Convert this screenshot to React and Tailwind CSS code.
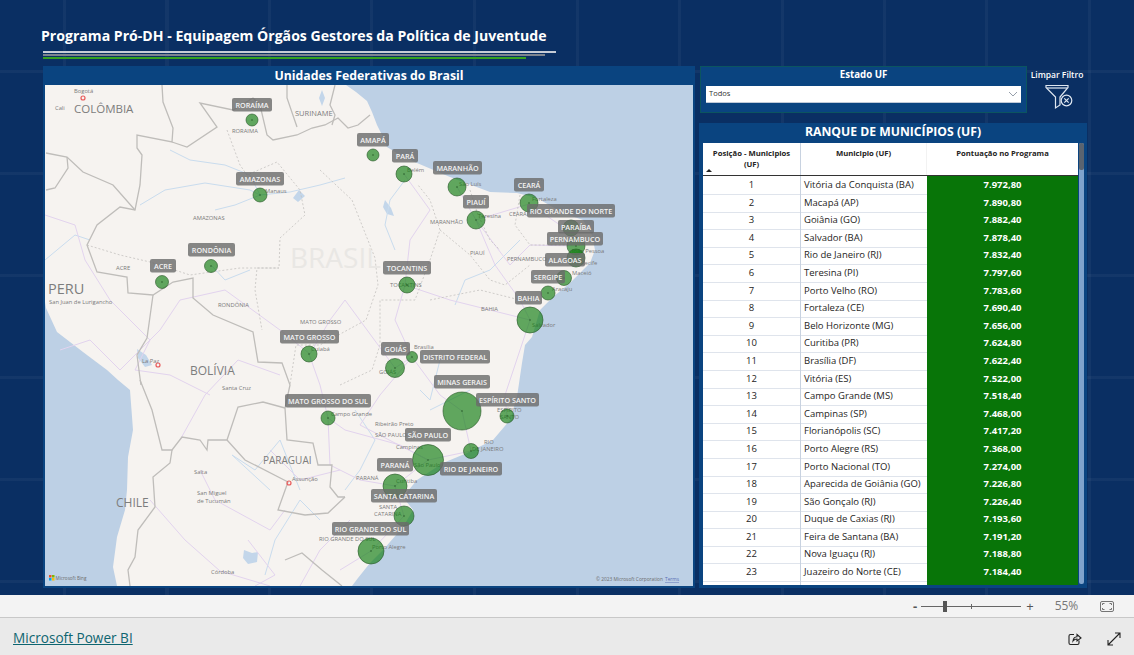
import React from "react";

const ROWS = [
  ["Vitória da Conquista (BA)", "7.972,80"],
  ["Macapá (AP)", "7.890,80"],
  ["Goiânia (GO)", "7.882,40"],
  ["Salvador (BA)", "7.878,40"],
  ["Rio de Janeiro (RJ)", "7.832,40"],
  ["Teresina (PI)", "7.797,60"],
  ["Porto Velho (RO)", "7.783,60"],
  ["Fortaleza (CE)", "7.690,40"],
  ["Belo Horizonte (MG)", "7.656,00"],
  ["Curitiba (PR)", "7.624,80"],
  ["Brasília (DF)", "7.622,40"],
  ["Vitória (ES)", "7.522,00"],
  ["Campo Grande (MS)", "7.518,40"],
  ["Campinas (SP)", "7.468,00"],
  ["Florianópolis (SC)", "7.417,20"],
  ["Porto Alegre (RS)", "7.368,00"],
  ["Porto Nacional (TO)", "7.274,00"],
  ["Aparecida de Goiânia (GO)", "7.226,80"],
  ["São Gonçalo (RJ)", "7.226,40"],
  ["Duque de Caxias (RJ)", "7.193,60"],
  ["Feira de Santana (BA)", "7.191,20"],
  ["Nova Iguaçu (RJ)", "7.188,80"],
  ["Juazeiro do Norte (CE)", "7.184,40"],
];

// map drawing uses page coordinates, the viewBox starts at the map's corner
const ATLANTIC =
  "M346,85 L356,92 L367,101 L372,112 L377,125 L383,137 L387,147 L400,155 L417,163 L450,177 L490,192 L517,193 L537,198 L563,213 L583,220 L592,235 L595,250 L590,263 L570,283 L553,297 L540,310 L532,337 L525,345 L522,363 L517,397 L510,420 L493,440 L467,453 L443,463 L417,480 L403,497 L413,510 L403,527 L383,550 L370,563 L358,578 L352,586 L693,586 L693,85 Z";
const PACIFIC =
  "M45,302 L46,308 L57,332 L83,352 L107,370 L118,380 L130,390 L133,430 L128,457 L127,490 L125,510 L117,537 L113,567 L117,586 L45,586 Z";

const BORDERS = [
  "162,85 163,102 173,128 172,142 137,135 137,148 142,155 140,185 135,210 120,207 97,225 87,245 97,272 127,277 128,293 153,295 173,282 193,278 193,298 213,315 253,332 258,362 282,363 290,385 285,408 287,440 313,443 318,465 332,465 330,487 338,497 345,497",
  "172,142 187,147 217,127 200,103 233,110 253,98 260,105 267,135 273,140 297,135 312,128 325,125 338,118 348,128 358,125 370,115",
  "287,85 287,98 297,127",
  "335,85 330,105 335,115 332,125",
  "46,153 67,157 83,172 113,185 135,210",
  "67,157 68,168 55,188 46,190",
  "153,295 147,338 137,355 140,378 141,385",
  "285,408 263,402 238,407 227,440 208,440 207,450 200,440 182,437 172,450 162,450 152,410 140,380",
  "227,440 245,460 288,482 278,510 305,515 328,513 345,497",
  "172,450 170,463 153,477 155,507 138,530 135,557 128,570 130,586",
  "285,560 302,553 322,570 342,586",
];

const STATE_LINES = [
  "227,130 240,165 247,175 277,162 300,190 305,215 280,238 279,268 257,268 255,290 262,330",
  "87,245 120,255 150,262 190,275 240,268 279,268",
  "320,170 352,200 375,258 378,285 366,320 320,345 296,345 290,385",
  "340,385 372,370 380,345 380,300 415,300 430,260 440,230 430,200 418,185",
  "440,230 470,255 490,280 505,285 530,265",
  "430,300 480,290 520,300",
  "470,190 478,215 490,240 500,250",
  "520,195 515,225 530,245 580,245",
];

const ROADS = [
  "45,215 75,225 85,260 110,300 150,340 135,370 170,375 210,395",
  "60,350 90,340 120,370 160,330 180,300 225,290 280,330 310,354 330,320 345,300 395,368 412,357 395,320 405,285 410,240 430,210 404,174",
  "412,357 440,395 462,411 471,451 428,460 395,486 404,516 371,551 340,570",
  "412,357 380,395 360,425 428,460",
  "309,354 320,385 328,418 345,430 400,445 428,460",
  "328,418 330,465 360,480 395,486",
  "476,220 510,265 530,245 576,246",
  "457,187 476,220 529,204 560,225",
  "476,220 495,265 520,300 530,320 505,395 507,416",
  "405,285 450,300 530,320",
  "180,440 205,395 238,360 280,375",
  "200,470 215,500 270,530 285,510",
  "150,500 185,540 220,571 270,586",
  "270,450 300,480 340,470",
  "350,520 320,550 300,586",
  "248,540 275,575 255,586",
];

const RIVERS = [
  "170,150 190,160 225,165 250,175 260,195 235,205 215,210",
  "140,205 165,190 205,183 250,190 260,195 290,192 320,185 345,178",
  "45,260 75,235 90,240",
  "212,266 225,280 250,270",
  "395,250 385,225 390,200 405,180",
  "520,240 490,270 465,280 455,305",
  "430,410 450,400 470,390",
  "300,490 280,440 255,470 232,455 270,490",
  "320,520 300,500 275,540 265,575",
  "355,410 375,440 360,470 345,490",
  "440,360 430,400 420,390",
];

const LAKES = [
  "M244,550 L252,553 L258,552 L257,562 L248,564 L243,558 Z",
  "M137,349 L146,355 L152,365 L145,367 L138,358 Z",
  "M322,90 L325,98 L322,106 L319,98 Z",
  "M385,200 L391,208 L394,216 L387,214 L383,207 Z",
  "M299,190 L305,196 L298,202 L293,198 Z",
];

const BUBBLES = [
  [252, 120, 6], [373, 155, 6], [404, 174, 8], [457, 187, 9], [476, 220, 9],
  [529, 203, 9], [260, 195, 7], [211, 266, 6.5], [162, 282, 6.5], [407, 285, 8],
  [571, 228, 8], [576, 246, 9], [576, 258, 9], [564, 278, 7.5], [548, 293, 7],
  [530, 320, 13], [309, 354, 8], [412, 357, 5.5], [395, 368, 9.5], [462, 411, 19],
  [507, 416, 7], [328, 418, 7], [471, 451, 7.5], [428, 460, 15.5], [395, 486, 12],
  [404, 516, 10], [371, 551, 13],
];

const LABELS = [
  ["RORAÍMA", 232, 98, 40], ["AMAZONAS", 236, 172, 48], ["RONDÔNIA", 188, 243, 47],
  ["ACRE", 150, 259, 26], ["MATO GROSSO", 280, 330, 59], ["AMAPÁ", 357, 133, 32],
  ["PARÁ", 392, 149, 26], ["MARANHÃO", 433, 161, 49], ["PIAUÍ", 463, 195, 26],
  ["CEARÁ", 514, 178, 30], ["RIO GRANDE DO NORTE", 527, 204, 88], ["PARAÍBA", 558, 220, 36],
  ["PERNAMBUCO", 547, 232, 56], ["ALAGOAS", 545, 253, 40], ["SERGIPE", 531, 270, 34],
  ["BAHIA", 515, 291, 27], ["TOCANTINS", 383, 261, 48], ["GOIÁS", 381, 342, 29],
  ["DISTRITO FEDERAL", 420, 350, 70], ["MINAS GERAIS", 434, 375, 56], ["ESPÍRITO SANTO", 476, 393, 63],
  ["MATO GROSSO DO SUL", 285, 394, 86], ["SÃO PAULO", 405, 428, 46], ["PARANÁ", 377, 458, 36],
  ["RIO DE JANEIRO", 440, 462, 62], ["SANTA CATARINA", 371, 489, 66], ["RIO GRANDE DO SUL", 332, 522, 77],
];

const COUNTRIES = [
  ["COLÔMBIA", 74, 113, 11.5], ["PERU", 48, 294, 14.5], ["BOLÍVIA", 190, 375, 12],
  ["PARAGUAI", 263, 464, 10], ["CHILE", 116, 507, 12], ["SURINAME", 295, 116, 7.5],
];

const PLACES = [
  ["Bogotá", 74, 93], ["Cali", 55, 110], ["San Juan de Lurigancho", 49, 304], ["RORAIMA", 232, 133],
  ["AMAZONAS", 193, 220], ["Manaus", 265, 193], ["ACRE", 116, 270], ["RONDÔNIA", 218, 307],
  ["MATO GROSSO", 300, 324], ["Cuiabá", 311, 351], ["La Paz", 142, 363], ["Santa Cruz", 222, 390],
  ["Salta", 194, 474], ["San Miguel", 197, 495], ["de Tucumán", 197, 503], ["Assunção", 292, 481],
  ["Córdoba", 211, 574], ["Belém", 407, 172], ["São Luís", 459, 186], ["Teresina", 478, 218],
  ["Fortaleza", 532, 201], ["CEARÁ", 509, 216], ["MARANHÃO", 430, 224], ["PIAUÍ", 470, 255],
  ["PERNAMBUCO", 507, 261], ["BAHIA", 481, 311], ["TOCANTINS", 390, 287], ["Aracaju", 552, 291],
  ["Salvador", 532, 327], ["Brasília", 414, 349], ["GOIÁS", 379, 374], ["Campo Grande", 331, 416],
  ["Ribeirão Preto", 375, 426], ["SÃO PAULO", 375, 437],
  ["Campinas", 396, 449], ["São Paulo", 414, 467], ["RIO", 484, 444], ["DE JANEIRO", 472, 451],
  ["PARANÁ", 356, 480], ["Curitiba", 396, 483], ["SANTA", 379, 509], ["CATARINA", 374, 516],
  ["RIO GRANDE DO SUL", 319, 541], ["Porto Alegre", 372, 549], ["ESPÍRITO", 497, 412], ["SANTO", 500, 419],
  ["Recife", 581, 265], ["Maceió", 572, 275], ["João Pessoa", 572, 253],
];

const CITY_MARKS = [[83, 98], [158, 365], [289, 483]];

function MapVisual() {
  return (
    <svg viewBox="45 85 648 501" className="block w-[648px] h-[501px] bg-[#f6f3f0]" fontFamily="'Open Sans', sans-serif">
      <path d={ATLANTIC} fill="#bdd0e5" />
      <path d={PACIFIC} fill="#bdd0e5" />
      {LAKES.map((d) => (
        <path key={d} d={d} fill="#c3d6ea" />
      ))}
      {RIVERS.map((p) => (
        <polyline key={p} points={p} fill="none" stroke="#c9dcee" strokeWidth="1" />
      ))}
      {ROADS.map((p) => (
        <polyline key={p} points={p} fill="none" stroke="#e2d3ee" strokeWidth="1" />
      ))}
      {STATE_LINES.map((p) => (
        <polyline key={p} points={p} fill="none" stroke="#c4c2bf" strokeWidth="0.8" strokeDasharray="2 2" />
      ))}
      {BORDERS.map((p) => (
        <polyline key={p} points={p} fill="none" stroke="#bfbdba" strokeWidth="1.3" />
      ))}
      <text x="290" y="268" fontSize="28" fill="#e9e7e4">BRASIL</text>
      {COUNTRIES.map(([t, x, y, s]) => (
        <text key={t} x={x} y={y} fontSize={s} fill="#7d7d7d">{t}</text>
      ))}
      {PLACES.map(([t, x, y]) => (
        <text key={t + x} x={x} y={y} fontSize="5.8" fill="#7a7a7a">{t}</text>
      ))}
      {CITY_MARKS.map(([x, y]) => (
        <circle key={x} cx={x} cy={y} r="2" fill="none" stroke="#e85a5a" strokeWidth="1.2" />
      ))}
      {BUBBLES.map(([x, y, r]) => (
        <g key={x + "-" + y}>
          <circle cx={x} cy={y} r={r} fill="#107c10" fillOpacity="0.65" stroke="#2c5c2c" strokeOpacity="0.8" strokeWidth="0.8" />
          <circle cx={x} cy={y} r="0.7" fill="#1f4f1f" />
        </g>
      ))}
      {LABELS.map(([t, x, y, w]) => (
        <g key={t}>
          <rect x={x} y={y} width={w} height="13.5" rx="2" fill="#6a6a6a" fillOpacity="0.8" />
          <text x={x + w / 2} y={y + 9.6} textAnchor="middle" fontSize="7.2" fontWeight="600" fill="#f4f4f4">{t}</text>
        </g>
      ))}
      <g>
        <rect x="49" y="575" width="2.5" height="2.5" fill="#f25022" />
        <rect x="52" y="575" width="2.5" height="2.5" fill="#7fba00" />
        <rect x="49" y="578" width="2.5" height="2.5" fill="#00a4ef" />
        <rect x="52" y="578" width="2.5" height="2.5" fill="#ffb900" />
        <text x="55.5" y="580" fontSize="4.6" fill="#6b6b6b">Microsoft Bing</text>
      </g>
      <text x="596" y="581" fontSize="4.8" fill="#6b6b6b">© 2023 Microsoft Corporation</text>
      <text x="665" y="581" fontSize="4.8" fill="#5b6fb5" textDecoration="underline">Terms</text>
    </svg>
  );
}

function FilterIcon() {
  return (
    <svg width="28" height="26" viewBox="0 0 28 26" fill="none" stroke="#dfe7f1" strokeWidth="1.2">
      <path d="M1 1.5 H23 L23 3.5 L15 13 V21 L10.5 24 V13 L1 3.5 Z" />
      <path d="M2 4 H22" />
      <circle cx="21.5" cy="16.5" r="5.3" />
      <path d="M19.3 14.3 L23.7 18.7 M23.7 14.3 L19.3 18.7" />
    </svg>
  );
}

function RankingTable() {
  return (
    <div className="relative flex-1 overflow-hidden ml-[4px] mr-[3px]">
      <div className="w-[375px] bg-white text-[#252423]">
        <div className="grid grid-cols-[98px_126px_151px] h-[33px] border-b border-[#333] text-[7.7px] font-bold text-center leading-[11px]">
          <div className="relative border-r border-[#c8d2e0] pt-[5px]">
            <div>Posição - Municipios</div>
            <div>(UF)</div>
            <div className="absolute left-[3px] bottom-[3px] w-0 h-0 border-x-[3px] border-x-transparent border-b-[3px] border-b-[#222]" />
          </div>
          <div className="pt-[5px] border-r border-[#f2f2f2]">Municipio (UF)</div>
          <div className="pt-[5px]">Pontuação no Programa</div>
        </div>
        {ROWS.map(([city, score], i) => (
          <div key={city} className="grid grid-cols-[98px_126px_151px] h-[17.6px] text-[9.5px] leading-[18px]">
            <div className="text-center border-r border-[#c8d2e0] border-b border-b-[#dfe4ec]">{i + 1}</div>
            <div className="pl-[3px] border-b border-[#dfe4ec] whitespace-nowrap">{city}</div>
            <div className="text-center bg-[#087508] text-white font-bold border-b border-[#8fbf8f]">{score}</div>
          </div>
        ))}
        <div className="grid grid-cols-[98px_126px_151px] h-[10px]">
          <div className="border-r border-[#c8d2e0]" />
          <div />
          <div className="bg-[#087508]" />
        </div>
      </div>
      <div className="absolute right-0 top-0 bottom-[1px] w-[5px] bg-[#7fa3cc] rounded-[2px]">
        <div className="h-[27px] bg-[#5a6470] rounded-[2px]" />
      </div>
    </div>
  );
}

export default function App() {
  return (
    <div className="w-[1134px] h-[655px] flex flex-col overflow-hidden font-['Open_Sans','Noto_Sans',sans-serif]">
      <main className="h-[595px] pl-[43px] bg-[#0a2f63] bg-[image:repeating-linear-gradient(90deg,transparent_0,transparent_63px,rgba(255,255,255,0.04)_63px,rgba(255,255,255,0.04)_66px,transparent_66px,transparent_102.5px),repeating-linear-gradient(0deg,transparent_0,transparent_12px,rgba(255,255,255,0.04)_12px,rgba(255,255,255,0.04)_15px,transparent_15px,transparent_102px)]">
        <header className="h-[66px] pt-[26px]">
          <h1 className="-ml-[2px] text-white font-bold text-[14.1px] leading-[20px] whitespace-nowrap">
            Programa Pró-DH - Equipagem Órgãos Gestores da Política de Juventude
          </h1>
          <div className="mt-[5px] w-[513px] h-[2px] bg-[#c6ccd6]" />
          <div className="mt-[1px] w-[502px] h-[2px] bg-[#7d8590]" />
          <div className="mt-[1px] w-[483px] h-[2px] bg-[#35a021]" />
        </header>
        <div className="flex">
          <section className="w-[652px] h-[522px] bg-[#0a4480]">
            <h2 className="h-[19px] text-center text-white font-bold text-[12.3px] leading-[19px]">Unidades Federativas do Brasil</h2>
            <div className="mx-[2px]">
              <MapVisual />
            </div>
          </section>
          <aside className="ml-[4px] w-[388px]">
            <div className="flex h-[47px]">
              <div className="ml-[1px] w-[327px] h-[47px] bg-[#0a4480] border border-[#0b5560] px-[5px]">
                <div className="h-[19px] text-center text-white font-bold text-[9.7px] leading-[15px]">Estado UF</div>
                <div className="flex items-center justify-between h-[17px] bg-white border-b border-[#c0cad8] pl-[3px] pr-[3px] text-[7.5px] text-[#333]">
                  <span>Todos</span>
                  <svg width="10" height="6" viewBox="0 0 10 6" fill="none" stroke="#8a94a0" strokeWidth="0.9">
                    <path d="M1 1 L5 5 L9 1" />
                  </svg>
                </div>
              </div>
              <div className="flex-1 flex flex-col items-center">
                <div className="mt-[4px] text-white text-[8.5px] font-semibold leading-[10px] whitespace-nowrap">Limpar Filtro</div>
                <div className="mt-[4px] ml-[4px]">
                  <FilterIcon />
                </div>
              </div>
            </div>
            <div className="mt-[10px] h-[465px] bg-[#0a4480] flex flex-col">
              <h2 className="h-[20px] text-center text-white font-bold text-[12.2px] leading-[18px]">RANQUE DE MUNICÍPIOS (UF)</h2>
              <RankingTable />
              <div className="h-[3px]" />
            </div>
          </aside>
        </div>
      </main>
      <div className="h-[23px] bg-[#f3f3f3] border-b border-[#c8c8c8] flex items-center text-[#555]">
        <span className="ml-[913px] text-[13px] font-bold leading-none">-</span>
        <div className="relative ml-[4px] w-[100px] h-[1px] bg-[#666]">
          <div className="absolute left-[22px] -top-[5px] w-[4px] h-[11px] bg-[#555]" />
          <div className="absolute left-[50px] -top-[2px] w-[1px] h-[5px] bg-[#666]" />
        </div>
        <span className="ml-[5px] text-[13px] leading-none">+</span>
        <span className="ml-[21px] text-[12px] text-[#777]">55%</span>
        <svg className="ml-[22px]" width="14" height="11" viewBox="0 0 14 11" fill="none" stroke="#666" strokeWidth="0.9">
          <rect x="0.5" y="0.5" width="13" height="10" rx="1.5" />
          <path d="M2.5 4 V2.5 H4.5 M9.5 2.5 H11.5 V4 M11.5 7 V8.5 H9.5 M4.5 8.5 H2.5 V7" />
        </svg>
      </div>
      <footer className="flex-1 bg-[#eaeaea] flex items-center pl-[13px] pt-[4px]">
        <a href="#" className="text-[13.6px] text-[#0e6570] underline">Microsoft Power BI</a>
        <div className="ml-auto flex items-center">
          <svg width="14" height="14" viewBox="0 0 14 14" fill="none" stroke="#222" strokeWidth="1.1">
            <path d="M6 2.5 H2.5 Q1 2.5 1 4 V11 Q1 12.5 2.5 12.5 H9.5 Q11 12.5 11 11 V8.5" />
            <path d="M5 9 Q5.5 5 9 4.8 V2.5 L13 6 L9 9 V7 Q6.5 7 5 9 Z" />
          </svg>
          <svg className="ml-[25px] mr-[13px]" width="14" height="14" viewBox="0 0 14 14" fill="none" stroke="#222" strokeWidth="1.1">
            <path d="M1 13 L13 1 M8 1 H13 V6 M1 8 V13 H6" />
          </svg>
        </div>
      </footer>
    </div>
  );
}
